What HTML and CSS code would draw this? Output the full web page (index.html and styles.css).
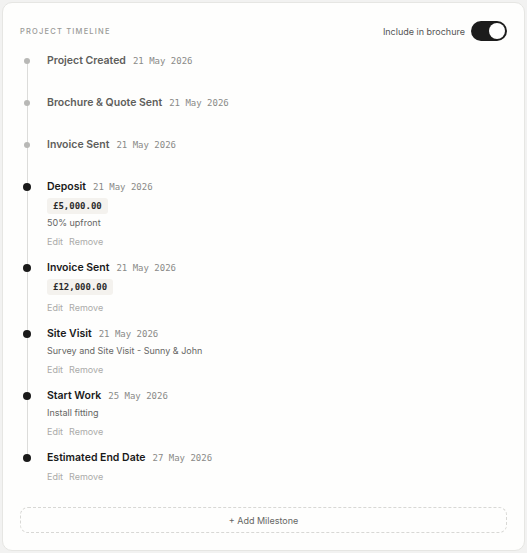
FILE: index.html
```html
<!DOCTYPE html>
<html lang="en">
<head>
<meta charset="utf-8">
<title>Project Timeline</title>
<link rel="stylesheet" href="styles.css">
</head>
<body>
<section class="card">
  <header class="card-head">
    <h2 class="eyebrow">Project Timeline</h2>
    <label class="toggle-wrap">
      <span class="toggle-label">Include in brochure</span>
      <span class="toggle"><span class="knob"></span></span>
    </label>
  </header>

  <ol class="timeline">
    <li class="item done">
      <span class="dot-col"><span class="dot"></span></span>
      <div class="body">
        <div class="title-row"><span class="title">Project Created</span><span class="date">21 May 2026</span></div>
      </div>
    </li>
    <li class="item done">
      <span class="dot-col"><span class="dot"></span></span>
      <div class="body">
        <div class="title-row"><span class="title">Brochure &amp; Quote Sent</span><span class="date">21 May 2026</span></div>
      </div>
    </li>
    <li class="item done">
      <span class="dot-col"><span class="dot"></span></span>
      <div class="body">
        <div class="title-row"><span class="title">Invoice Sent</span><span class="date">21 May 2026</span></div>
      </div>
    </li>
    <li class="item">
      <span class="dot-col"><span class="dot"></span></span>
      <div class="body">
        <div class="title-row"><span class="title">Deposit</span><span class="date">21 May 2026</span></div>
        <span class="amount">£5,000.00</span>
        <p class="desc">50% upfront</p>
        <div class="actions"><a>Edit</a><a>Remove</a></div>
      </div>
    </li>
    <li class="item">
      <span class="dot-col"><span class="dot"></span></span>
      <div class="body">
        <div class="title-row"><span class="title">Invoice Sent</span><span class="date">21 May 2026</span></div>
        <span class="amount">£12,000.00</span>
        <div class="actions"><a>Edit</a><a>Remove</a></div>
      </div>
    </li>
    <li class="item">
      <span class="dot-col"><span class="dot"></span></span>
      <div class="body">
        <div class="title-row"><span class="title">Site Visit</span><span class="date">21 May 2026</span></div>
        <p class="desc">Survey and Site Visit - Sunny &amp; John</p>
        <div class="actions"><a>Edit</a><a>Remove</a></div>
      </div>
    </li>
    <li class="item">
      <span class="dot-col"><span class="dot"></span></span>
      <div class="body">
        <div class="title-row"><span class="title">Start Work</span><span class="date">25 May 2026</span></div>
        <p class="desc">Install fitting</p>
        <div class="actions"><a>Edit</a><a>Remove</a></div>
      </div>
    </li>
    <li class="item">
      <span class="dot-col"><span class="dot"></span></span>
      <div class="body">
        <div class="title-row"><span class="title">Estimated End Date</span><span class="date">27 May 2026</span></div>
        <div class="actions"><a>Edit</a><a>Remove</a></div>
      </div>
    </li>
  </ol>

  <button class="add-btn" type="button">+ Add Milestone</button>
</section>
</body>
</html>
```

FILE: styles.css
```css
* { box-sizing: border-box; }

html, body {
  margin: 0;
  padding: 0;
}

body {
  background: #f2f2f1;
  font-family: Inter, "Noto Sans", "Liberation Sans", sans-serif;
  color: #1a1a1a;
  padding: 2px;
}

.card {
  background: #fefefd;
  border: 1px solid #e6e6e3;
  border-radius: 10px;
  padding: 18px 17px 17px 17px;
  min-height: 549px;
  display: flex;
  flex-direction: column;
}

.card-head {
  display: flex;
  align-items: center;
  justify-content: space-between;
  height: 20px;
}

.eyebrow {
  margin: 0;
  font-size: 7.5px;
  font-weight: 500;
  letter-spacing: 0.16em;
  text-transform: uppercase;
  color: #9a9a98;
}

.toggle-wrap {
  display: flex;
  align-items: center;
  gap: 6px;
}

.toggle-label {
  font-size: 9px;
  color: #555;
}

.toggle {
  width: 36px;
  height: 20px;
  border-radius: 10px;
  background: #1c1c1c;
  display: flex;
  align-items: center;
  justify-content: flex-end;
  padding: 2px;
}

.knob {
  width: 16px;
  height: 16px;
  border-radius: 50%;
  background: #fff;
}

.timeline {
  list-style: none;
  margin: 12px 0 0 0;
  padding: 0;
}

.item {
  position: relative;
  display: flex;
  padding-bottom: 11px;
}

.item.done {
  padding-bottom: 26px;
}

.item:not(:last-child)::before {
  content: "";
  position: absolute;
  left: 6.5px;
  top: 8px;
  bottom: -8px;
  width: 1px;
  background: #dcdcda;
}

.dot-col {
  width: 14px;
  height: 16px;
  display: flex;
  align-items: center;
  justify-content: center;
  flex: none;
  position: relative;
  z-index: 1;
}

.dot {
  width: 8px;
  height: 8px;
  border-radius: 50%;
  background: #1a1a1a;
}

.done .dot {
  width: 6px;
  height: 6px;
  background: #b8b8b6;
}

.body {
  margin-left: 13px;
  display: flex;
  flex-direction: column;
  align-items: flex-start;
}

.title-row {
  display: flex;
  align-items: baseline;
  gap: 7px;
  height: 16px;
  line-height: 16px;
}

.title {
  font-size: 10.5px;
  font-weight: 600;
  color: #1a1a1a;
}

.done .title {
  color: #5e5e5c;
}

.date {
  font-family: "DejaVu Sans Mono", "Liberation Mono", monospace;
  font-size: 9px;
  color: #8a8a88;
}

.amount {
  margin-top: 3px;
  height: 16px;
  line-height: 16px;
  padding: 0 6px;
  background: #f4f2ee;
  border-radius: 3px;
  font-family: "DejaVu Sans Mono", "Liberation Mono", monospace;
  font-size: 9px;
  font-weight: 600;
  color: #2a2a2a;
}

.desc {
  margin: 1px 0 0 0;
  font-size: 9px;
  line-height: 16px;
  color: #666664;
}

.actions {
  margin-top: 4px;
  display: flex;
  gap: 6px;
  font-size: 9px;
  line-height: 14px;
  color: #ababa9;
}

.amount + .actions {
  margin-top: 6px;
}

.add-btn {
  margin-top: 12px;
  height: 26px;
  width: 100%;
  border: 1px dashed #d8d8d5;
  border-radius: 8px;
  background: transparent;
  font-family: Inter, "Noto Sans", "Liberation Sans", sans-serif;
  font-size: 9px;
  color: #666664;
}
```
